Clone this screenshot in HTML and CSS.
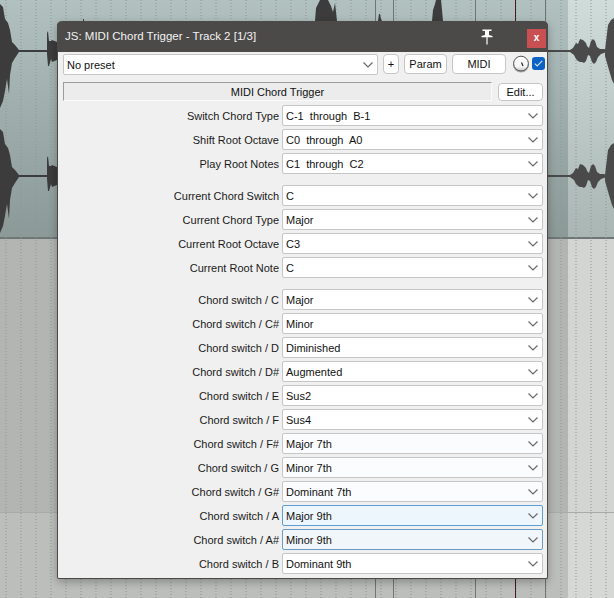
FILE: index.html
```html
<!DOCTYPE html>
<html lang="en">
<head>
<meta charset="utf-8">
<title>JS: MIDI Chord Trigger - Track 2 [1/3]</title>
<link rel="stylesheet" href="styles.css">
</head>
<body>
<div class="desktop">
  <svg class="arrange" width="614" height="598" viewBox="0 0 614 598" aria-hidden="true">
    <defs>
      <linearGradient id="laneDark" x1="0" y1="0" x2="0" y2="1"><stop offset="0" stop-color="#b1c1c0"/><stop offset="1" stop-color="#8b9997"/></linearGradient>
      <linearGradient id="laneLight" x1="0" y1="0" x2="0" y2="1"><stop offset="0" stop-color="#d0dcda"/><stop offset="1" stop-color="#a9b6b4"/></linearGradient>
      <linearGradient id="knobFace" x1="0" y1="0" x2="0" y2="1"><stop offset="0" stop-color="#ffffff"/><stop offset="0.7" stop-color="#f4f4f4"/><stop offset="1" stop-color="#c4c4c4"/></linearGradient>
      <path id="wave" d="M0 -47 L3 -44 L5 -32 L8 -28 L10 -21 L12 -9 L15 -6 L19 -1 L47 -1 L47 -18 L48 -20 L49 -10 L51 -10 L52 -11 L57 -9 L57 9 L52 11 L51 8 L49 15 L48 15 L47 3 L47 1 L19 1 L15 7 L12 12 L10 24 L9 43 L7 28 L5 40 L3 50 L0 57 Z"/>
      <path id="waveR" d="M548 -1 L570 -1 L573 -3 L576 -8 L578 -7 L580 -12 L583 -11 L585 -9 L586 -8 L587 -5 L589 -3 L591 -10 L593 -12 L595 -10 L597 -4 L600 -2 L604 -2 L606 -1 L606 1 L604 2 L601 3 L598 6 L596 11 L594 13 L592 11 L590 5 L588 4 L586 10 L584 12 L582 11 L580 11 L578 10 L576 8 L574 4 L570 1 L548 1 Z"/>
    </defs>
    <rect x="0" y="0" width="568" height="237" fill="url(#laneDark)"/>
    <rect x="568" y="0" width="46" height="237" fill="url(#laneLight)"/>
    <rect x="0" y="237" width="614" height="2" fill="#6f7776"/>
    <rect x="0" y="239" width="568" height="273" fill="#b3b5b3"/>
    <rect x="568" y="239" width="46" height="273" fill="#d3d5d3"/>
    <rect x="0" y="513" width="568" height="85" fill="#bcbebc"/>
    <rect x="568" y="513" width="46" height="85" fill="#d6d8d6"/>
    <rect x="0" y="512" width="614" height="1" fill="#a9aba9"/>
    <g class="grid">
      <path d="M6 0V598M21 0V598M36 0V598M51 0V598M66 0V598M81 0V598M96 0V598M111 0V598M126 0V598M141 0V598M156 0V598M171 0V598M186 0V598M201 0V598M216 0V598M231 0V598M246 0V598M261 0V598M276 0V598M291 0V598M306 0V598M321 0V598M336 0V598M351 0V598M366 0V598M381 0V598M396 0V598M411 0V598M426 0V598M441 0V598M456 0V598M471 0V598M486 0V598M501 0V598M516 0V598M531 0V598M546 0V598M561 0V598M576 0V598M591 0V598M606 0V598"/>
    </g>
    <path d="M375.5 0V598M393.5 0V598M475.5 0V598M545.5 0V598" stroke="#6f7675" fill="none"/>
    <path d="M515.5 0V598" stroke="#4a1a1e" fill="none"/>
    <use href="#wave" y="51" fill="#3c3c3c"/>
    <use href="#wave" y="176" fill="#3c3c3c"/>
    <use href="#waveR" y="51" fill="#4a4a4a"/>
    <use href="#waveR" y="176" fill="#4a4a4a"/>
    <path d="M605 50 L608 25 L611 20 L614 18 L614 84 L612 80 L609 70 L605 56 Z" fill="#4a4a4a"/>
    <path d="M605 175 L608 150 L611 145 L614 143 L614 209 L612 205 L609 195 L605 181 Z" fill="#4a4a4a"/>
    <path d="M315 21 L316 8 L319 2 L320 0 L328 0 L331 6 L333 12 L335 3 L336 12 L337 21 Z" fill="#3c3c3c"/>
    <path d="M334 21 L334 10 L335 10 L336 21 Z" fill="#3c3c3c"/>
    <path d="M378 21 L379 14 L380 14 L381 19 L382 21 Z" fill="#3c3c3c"/>
    <path d="M83 21 L83 19 L84 19 L84 21 Z" fill="#3c3c3c"/>
    <path d="M432 21 L433 10 L435 4 L436 0 L441 0 L442 10 L443 21 Z" fill="#3c3c3c"/>
  </svg>

  <section class="window">
    <header class="titlebar">
      <span class="title">JS: MIDI Chord Trigger - Track 2 [1/3]</span>
      <svg class="pin" width="14" height="16" viewBox="0 0 14 16" aria-hidden="true"><path d="M2.5 0.5H11.5V2H9V6L12.5 7V8.2H7.6V15.5H6.4V8.2H1.5V7L5 6V2H2.5Z" fill="#fff"/></svg>
      <button class="close">x</button>
    </header>

    <div class="toolbar">
      <div class="field preset"><span>No preset</span><svg class="chev" width="10" height="6" viewBox="0 0 10 6"><path d="M0.5 0.5L5 5L9.5 0.5" fill="none" stroke="#666" stroke-width="1.1"/></svg></div>
      <button class="btn plus">+</button>
      <button class="btn param">Param</button>
      <button class="btn midi">MIDI</button>
      <svg class="knob" width="18" height="18" viewBox="0 0 18 18" aria-hidden="true"><circle cx="9" cy="9.6" r="8" fill="#a8a8a8"/><circle cx="9" cy="8.6" r="7.4" fill="url(#knobFace)" stroke="#555"/><path d="M9.5 7.5L11 11" stroke="#222" stroke-width="1.2"/></svg>
      <span class="check"><svg width="9" height="7" viewBox="0 0 9 7"><path d="M0.8 3.6L3.2 6L8.2 0.8" fill="none" stroke="#cfe2f7" stroke-width="1.1"/></svg></span>
    </div>

    <div class="heading-row">
      <div class="heading">MIDI Chord Trigger</div>
      <button class="btn edit">Edit...</button>
    </div>

    <div class="params">
      <div class="group">
        <div class="row"><label>Switch Chord Type</label><div class="field"><span>C-1&nbsp; through&nbsp; B-1</span><svg class="chev" width="10" height="6" viewBox="0 0 10 6"><path d="M0.5 0.5L5 5L9.5 0.5" fill="none" stroke="#666" stroke-width="1.1"/></svg></div></div>
        <div class="row"><label>Shift Root Octave</label><div class="field"><span>C0&nbsp; through&nbsp; A0</span><svg class="chev" width="10" height="6" viewBox="0 0 10 6"><path d="M0.5 0.5L5 5L9.5 0.5" fill="none" stroke="#666" stroke-width="1.1"/></svg></div></div>
        <div class="row"><label>Play Root Notes</label><div class="field"><span>C1&nbsp; through&nbsp; C2</span><svg class="chev" width="10" height="6" viewBox="0 0 10 6"><path d="M0.5 0.5L5 5L9.5 0.5" fill="none" stroke="#666" stroke-width="1.1"/></svg></div></div>
      </div>
      <div class="group">
        <div class="row"><label>Current Chord Switch</label><div class="field"><span>C</span><svg class="chev" width="10" height="6" viewBox="0 0 10 6"><path d="M0.5 0.5L5 5L9.5 0.5" fill="none" stroke="#666" stroke-width="1.1"/></svg></div></div>
        <div class="row"><label>Current Chord Type</label><div class="field"><span>Major</span><svg class="chev" width="10" height="6" viewBox="0 0 10 6"><path d="M0.5 0.5L5 5L9.5 0.5" fill="none" stroke="#666" stroke-width="1.1"/></svg></div></div>
        <div class="row"><label>Current Root Octave</label><div class="field"><span>C3</span><svg class="chev" width="10" height="6" viewBox="0 0 10 6"><path d="M0.5 0.5L5 5L9.5 0.5" fill="none" stroke="#666" stroke-width="1.1"/></svg></div></div>
        <div class="row"><label>Current Root Note</label><div class="field"><span>C</span><svg class="chev" width="10" height="6" viewBox="0 0 10 6"><path d="M0.5 0.5L5 5L9.5 0.5" fill="none" stroke="#666" stroke-width="1.1"/></svg></div></div>
      </div>
      <div class="group">
        <div class="row"><label>Chord switch / C</label><div class="field"><span>Major</span><svg class="chev" width="10" height="6" viewBox="0 0 10 6"><path d="M0.5 0.5L5 5L9.5 0.5" fill="none" stroke="#666" stroke-width="1.1"/></svg></div></div>
        <div class="row"><label>Chord switch / C#</label><div class="field"><span>Minor</span><svg class="chev" width="10" height="6" viewBox="0 0 10 6"><path d="M0.5 0.5L5 5L9.5 0.5" fill="none" stroke="#666" stroke-width="1.1"/></svg></div></div>
        <div class="row"><label>Chord switch / D</label><div class="field"><span>Diminished</span><svg class="chev" width="10" height="6" viewBox="0 0 10 6"><path d="M0.5 0.5L5 5L9.5 0.5" fill="none" stroke="#666" stroke-width="1.1"/></svg></div></div>
        <div class="row"><label>Chord switch / D#</label><div class="field"><span>Augmented</span><svg class="chev" width="10" height="6" viewBox="0 0 10 6"><path d="M0.5 0.5L5 5L9.5 0.5" fill="none" stroke="#666" stroke-width="1.1"/></svg></div></div>
        <div class="row"><label>Chord switch / E</label><div class="field"><span>Sus2</span><svg class="chev" width="10" height="6" viewBox="0 0 10 6"><path d="M0.5 0.5L5 5L9.5 0.5" fill="none" stroke="#666" stroke-width="1.1"/></svg></div></div>
        <div class="row"><label>Chord switch / F</label><div class="field"><span>Sus4</span><svg class="chev" width="10" height="6" viewBox="0 0 10 6"><path d="M0.5 0.5L5 5L9.5 0.5" fill="none" stroke="#666" stroke-width="1.1"/></svg></div></div>
        <div class="row"><label>Chord switch / F#</label><div class="field tint1"><span>Major 7th</span><svg class="chev" width="10" height="6" viewBox="0 0 10 6"><path d="M0.5 0.5L5 5L9.5 0.5" fill="none" stroke="#666" stroke-width="1.1"/></svg></div></div>
        <div class="row"><label>Chord switch / G</label><div class="field tint1"><span>Minor 7th</span><svg class="chev" width="10" height="6" viewBox="0 0 10 6"><path d="M0.5 0.5L5 5L9.5 0.5" fill="none" stroke="#666" stroke-width="1.1"/></svg></div></div>
        <div class="row"><label>Chord switch / G#</label><div class="field tint1"><span>Dominant 7th</span><svg class="chev" width="10" height="6" viewBox="0 0 10 6"><path d="M0.5 0.5L5 5L9.5 0.5" fill="none" stroke="#666" stroke-width="1.1"/></svg></div></div>
        <div class="row"><label>Chord switch / A</label><div class="field hover"><span>Major 9th</span><svg class="chev" width="10" height="6" viewBox="0 0 10 6"><path d="M0.5 0.5L5 5L9.5 0.5" fill="none" stroke="#666" stroke-width="1.1"/></svg></div></div>
        <div class="row"><label>Chord switch / A#</label><div class="field hover2"><span>Minor 9th</span><svg class="chev" width="10" height="6" viewBox="0 0 10 6"><path d="M0.5 0.5L5 5L9.5 0.5" fill="none" stroke="#666" stroke-width="1.1"/></svg></div></div>
        <div class="row"><label>Chord switch / B</label><div class="field"><span>Dominant 9th</span><svg class="chev" width="10" height="6" viewBox="0 0 10 6"><path d="M0.5 0.5L5 5L9.5 0.5" fill="none" stroke="#666" stroke-width="1.1"/></svg></div></div>
      </div>
    </div>
  </section>
</div>
</body>
</html>
```

FILE: styles.css
```css
* { box-sizing: border-box; }
html, body { margin: 0; padding: 0; }
body {
  width: 614px;
  height: 598px;
  overflow: hidden;
  font-family: "Liberation Sans", Arial, sans-serif;
  font-size: 11px;
  color: #111;
}
.desktop { position: relative; width: 614px; height: 598px; overflow: hidden; }
.arrange { position: absolute; left: 0; top: 0; display: block; }
.grid path { stroke: #8f9695; stroke-width: 1; stroke-dasharray: 1 2; fill: none; }

.window {
  position: absolute;
  left: 57px;
  top: 21px;
  width: 491px;
  height: 558px;
  background: #f0f0f0;
  border: 1px solid #4b4a48;
  border-top: 0;
  border-radius: 5px 5px 2px 2px;
  box-shadow: 0 3px 9px rgba(0,0,0,.28);
}
.titlebar {
  display: flex;
  align-items: flex-start;
  height: 31px;
  margin: 0 -1px;
  background: #4b4a48;
  border-radius: 5px 5px 0 0;
  position: relative;
}
.title { color: #f2f2f2; font-size: 11.5px; line-height: 17px; margin: 7px 0 0 8px; flex: 1; }
.pin { margin: 8px 33px 0 0; }
.close {
  width: 19px;
  height: 19px;
  margin: 8px 2px 0 0;
  padding: 0 0 2px;
  border: 0;
  background: #c85052;
  color: #fff;
  font: bold 10px/17px "Liberation Sans", Arial, sans-serif;
}

.toolbar { display: flex; align-items: flex-start; height: 29px; padding: 2px 0 0 5px; }
.field {
  display: flex;
  align-items: center;
  justify-content: space-between;
  height: 21px;
  padding: 0 4px 0 3px;
  background: #fff;
  border: 1px solid #c6c6c6;
  border-radius: 2px;
  font-size: 11px;
  color: #111;
}
.field .chev { flex: none; margin-top: 1px; }
.preset { width: 315px; }
.btn {
  height: 20px;
  padding: 0;
  background: #fff;
  border: 1px solid #c6c6c6;
  border-radius: 4px;
  font: 11px/16px "Liberation Sans", Arial, sans-serif;
  color: #111;
}
.plus { width: 16px; margin-left: 5px; }
.param { width: 43px; margin-left: 5px; }
.midi { width: 54px; margin-left: 5px; }
.knob { margin: 1px 0 0 6px; flex: none; }
.check {
  display: flex;
  align-items: center;
  justify-content: center;
  width: 13px;
  height: 13px;
  margin: 3px 0 0 2px;
  background: #0a62c4;
  border-radius: 3px;
}

.heading-row { display: flex; align-items: flex-start; height: 24px; padding: 1px 0 0 5px; }
.heading {
  width: 429px;
  height: 19px;
  background: #ececec;
  border-top: 1px solid #9c9c9c;
  border-left: 1px solid #9c9c9c;
  border-right: 1px solid #fafafa;
  border-bottom: 1px solid #fafafa;
  text-align: center;
  font-size: 11px;
  line-height: 18px;
}
.edit { width: 45px; height: 18px; margin: 1px 0 0 6px; line-height: 14px; }

.params { display: flex; flex-direction: column; gap: 11px; }
.group { display: flex; flex-direction: column; gap: 3px; }
.row { display: flex; align-items: center; height: 21px; }
.row label { width: 224px; text-align: right; font-size: 11px; color: #1a1a1a; padding-right: 3px; }
.row .field { width: 261px; margin-left: 0; }
.tint1 { background: #fbfcfe; }
.hover { background: #eef6fd; border-color: #5c9fd6; }
.hover2 { background: #f1f6fb; border-color: #6a9cc8; }
```
